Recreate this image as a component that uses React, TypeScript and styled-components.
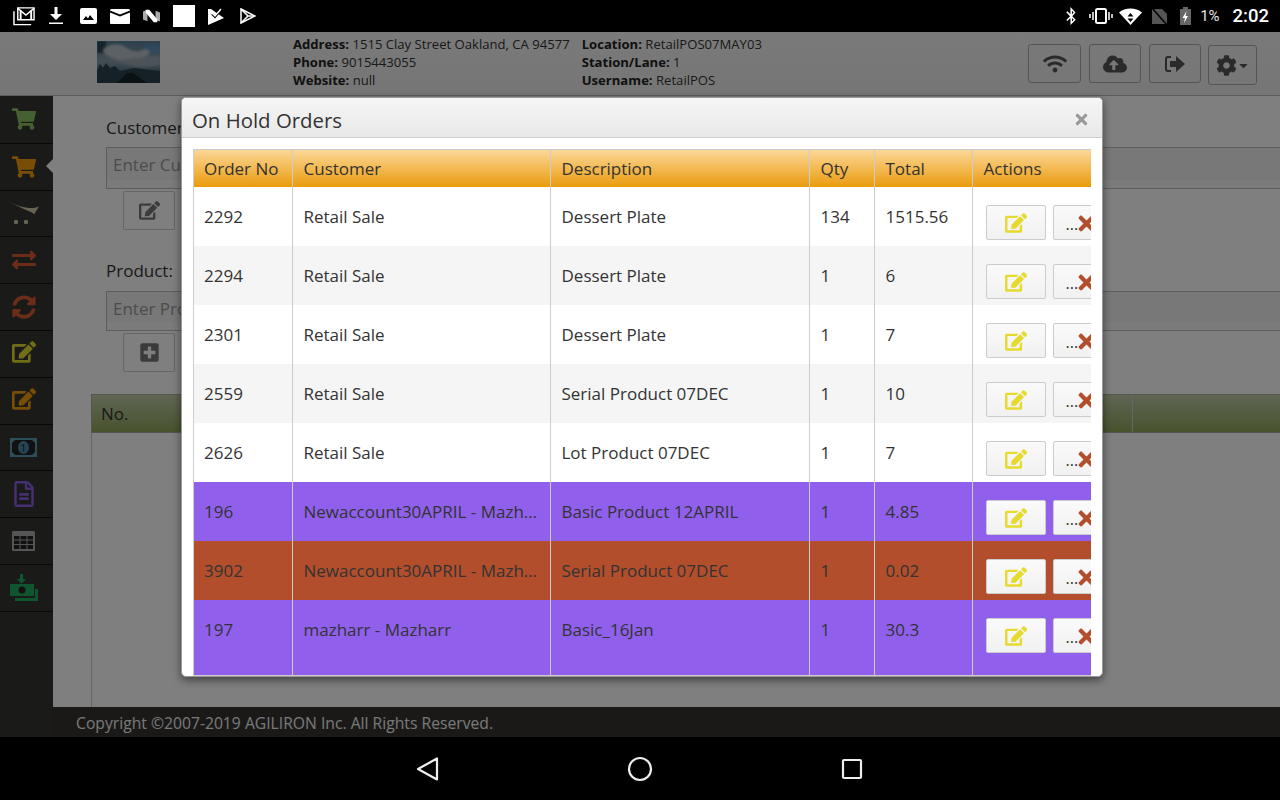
import React from 'react'
import styled, { createGlobalStyle } from 'styled-components'
import {
  FaShoppingCart, FaExchangeAlt, FaSyncAlt, FaEdit, FaRegFileAlt,
  FaWifi, FaCloudUploadAlt, FaCog, FaCaretDown, FaTimes, FaPlusSquare, FaBluetoothB,
} from 'react-icons/fa'

const GlobalStyle = createGlobalStyle`
  html, body { margin: 0; padding: 0; background: #000; }
  body { font-family: "Open Sans", "Liberation Sans", sans-serif; color: #333; }
  * { box-sizing: border-box; }
`

const Page = styled.div`
  width: 1280px;
  height: 800px;
  display: flex;
  flex-direction: column;
  overflow: hidden;
`

const StatusBar = styled.div`
  height: 32px;
  background: #000;
  display: flex;
  align-items: center;
  justify-content: space-between;
  padding: 0 11px 0 13px;
  color: #fff;
`

const StatusGroup = styled.div`
  display: flex;
  align-items: center;
  gap: ${p => p.$gap}px;
`

const BatteryText = styled.span`
  font-family: Roboto, sans-serif;
  font-size: 15px;
  color: #e4e4e4;
`

const Clock = styled.span`
  font-family: Roboto, sans-serif;
  font-size: 18.5px;
  font-weight: 500;
  margin-left: 4px;
`

const WhiteSquare = styled.div`
  width: 22px;
  height: 22px;
  background: #fff;
`

const Screen = styled.div`
  flex: 1;
  position: relative;
  display: flex;
  flex-direction: column;
  min-height: 0;
`

const Header = styled.header`
  height: 64px;
  background: linear-gradient(#f4f4f4, #ececec);
  border-bottom: 1px solid #bbb;
  display: flex;
  align-items: flex-start;
  padding: 0 23px 0 97px;
`

const Logo = styled.svg`
  width: 63px;
  height: 42px;
  margin-top: 9px;
  margin-right: 133px;
  flex: none;
`

const InfoColumn = styled.div`
  font-size: 13.1px;
  line-height: 18px;
  padding-top: 3px;
  margin-right: ${p => p.$right}px;
  white-space: nowrap;
  color: #333;

  b { font-weight: 700; color: #222; }
`

const HeaderButtons = styled.div`
  margin-left: auto;
  display: flex;
  gap: 8px;
  padding-top: 12px;
`

const HeaderButton = styled.div`
  width: ${p => p.$w}px;
  height: ${p => p.$h || 39}px;
  margin-top: ${p => p.$top || 0}px;
  margin-left: ${p => p.$left || 0}px;
  border: 1px solid #aaa;
  border-radius: 3px;
  display: flex;
  align-items: center;
  justify-content: center;
  color: #555;
  font-size: 24px;
`

const Body = styled.div`
  flex: 1;
  display: flex;
  min-height: 0;
`

const Sidebar = styled.nav`
  width: 53px;
  background: #353432;
  flex: none;
  padding-top: 1px;
`

const SideItem = styled.div`
  height: 46.8px;
  border-bottom: 1px solid #111;
  display: flex;
  align-items: center;
  justify-content: center;
  position: relative;
  padding-right: 6px;
  padding-bottom: ${p => p.$lift || 0}px;
  font-size: 24px;
  color: ${p => p.$color};
`

const ActiveArrow = styled.span`
  position: absolute;
  right: 0;
  top: 15px;
  border: 7px solid transparent;
  border-left: 0;
  border-right-color: #fff;
`

const Main = styled.div`
  flex: 1;
  display: flex;
  flex-direction: column;
  min-width: 0;
`

const Content = styled.div`
  flex: 1;
  background: #fff;
  padding: 21px 0 0 38px;
  overflow: hidden;
`

const Form = styled.div`
  padding-left: 15px;
`

const FieldLabel = styled.div`
  font-size: 17px;
  line-height: 22px;
  margin-bottom: ${p => p.$gap}px;
`

const Input = styled.div`
  height: ${p => p.$h}px;
  border: 1px solid #bbb;
  border-right: 0;
  background: linear-gradient(#f0f0f0 80%, #f6f6f6 80%);
  padding-left: 6px;
  font-size: 17px;
  line-height: 34px;
  color: #999;
`

const SmallButton = styled.div`
  width: 52px;
  height: 39px;
  margin: 2px 0 30px 17px;
  border: 1px solid #ccc;
  border-radius: 2px;
  display: flex;
  align-items: center;
  justify-content: center;
  color: #777;
  font-size: 21px;
`

const GridHead = styled.div`
  height: 39px;
  margin-top: -8px;
  background: linear-gradient(#c0cca8, #90a65a);
  border: 1px solid #aaa;
  border-right: 0;
  display: flex;
  align-items: center;
  padding-left: 9px;
  font-size: 17px;
`

const GridEnd = styled.div`
  width: 148px;
  align-self: stretch;
  margin-left: auto;
  border-left: 1px solid #ccc;
`

const GridBody = styled.div`
  height: 275px;
  border-left: 1px solid #ccc;
`

const Footer = styled.footer`
  height: 30px;
  background: #343331;
  color: #f0f0f0;
  font-size: 15.7px;
  line-height: 32px;
  padding-left: 23px;
`

const Backdrop = styled.div`
  position: absolute;
  inset: 0;
  background: rgba(0, 0, 0, 0.5);
`

const Modal = styled.div`
  position: absolute;
  top: 65px;
  left: 181px;
  width: 922px;
  height: 580px;
  background: #fff;
  border: 1px solid #999;
  border-radius: 5px;
  box-shadow: 0 3px 9px rgba(0, 0, 0, 0.5);
  overflow: hidden;
`

const ModalHeader = styled.div`
  height: 40px;
  background: linear-gradient(#f6f6f6, #e8e8e8);
  border-bottom: 1px solid #ccc;
  display: flex;
  align-items: center;
  justify-content: space-between;
  padding: 4px 12px 0 10px;
`

const ModalTitle = styled.div`
  font-size: 20.4px;
  color: #333;
`

const Close = styled.span`
  color: #999;
  font-size: 17px;
  display: flex;
`

const TableClip = styled.div`
  margin: 11px 0 0 11px;
  width: 898px;
  height: 527px;
  overflow: hidden;
  border-top: 1px solid #ccc;
  border-left: 1px solid #ccc;
  border-bottom: 1px solid #ccc;
`

const Table = styled.table`
  table-layout: fixed;
  width: 898px;
  border-collapse: collapse;
  font-size: 17px;
`

const Th = styled.th`
  height: 37px;
  padding: 0 10px;
  text-align: left;
  font-weight: 400;
  color: #333;
  background: linear-gradient(#fbd797, #ea9b0d);
  border-right: 1px solid #ccc;

  &:not(:first-child) { padding-left: 11px; }
  &:last-child { border-right: 0; }
`

const Row = styled.tr`
  background: ${p => p.$bg};
`

const Td = styled.td`
  height: ${p => (p.$tall ? 75 : 59)}px;
  padding: 19px 10px 0;
  vertical-align: top;
  line-height: 22px;
  white-space: nowrap;
  overflow: hidden;
  text-overflow: ellipsis;
  border-right: 1px solid #ccc;
  color: #333;

  &:not(:first-child) { padding-left: 11px; }
  &:last-child { border-right: 0; }
`

const ActionCell = styled.td`
  height: ${p => (p.$tall ? 75 : 59)}px;
  padding: 18px 0 0 13px;
  vertical-align: top;
  overflow: hidden;
`

const Actions = styled.div`
  display: flex;
  gap: 7px;
  width: 200px;
`

const ActionButton = styled.div`
  width: 60px;
  height: 35px;
  flex: none;
  position: relative;
  background: linear-gradient(#fafafa, #f1f1f1);
  border: 1px solid #ccc;
  border-radius: 2px;
  display: flex;
  align-items: center;
  justify-content: center;
  color: #e6da2e;
  font-size: 22px;
`

const Dots = styled.span`
  position: absolute;
  left: 12px;
  top: 7px;
  font-size: 16px;
  color: #333;
`

const RedX = styled.span`
  position: absolute;
  left: 21px;
  top: 6px;
  color: #b24e2b;
  font-size: 23px;
  display: flex;
`

const NavBar = styled.div`
  height: 63px;
  background: #000;
  display: flex;
  align-items: center;
  justify-content: center;
  gap: 187px;
`

const Bill = () => (
  <svg width="27" height="19" viewBox="0 0 27 19">
    <rect width="27" height="19" fill="#5a9bb5" />
    <path d="M5 2h17l3 3v9l-3 3H5l-3-3V5z" fill="#222" />
    <ellipse cx="13.500" cy="9.500" rx="5.500" ry="6.500" fill="#4a88a8" />
    <text x="13.500" y="14" textAnchor="middle" fontSize="11" fontFamily="Open Sans" fill="#222">1</text>
  </svg>
)

const CashDrop = () => (
  <svg width="28" height="27" viewBox="0 0 28 27">
    <path d="M10 0h3v5h3l-4.500 4.500L7 5h3z" fill="#1faa5f" />
    <rect y="10" width="24" height="12" fill="#1faa5f" />
    <circle cx="12" cy="16" r="3.500" fill="#222" />
    <path d="M25 15h3v12H5v-3h20z" fill="#1faa5f" />
  </svg>
)

const CartSwoosh = () => (
  <svg width="32" height="26" viewBox="0 0 32 26" fill="#cfc8a4">
    <path d="M0 1C8 6 18 8.500 26 8L31 6.500L26 14.500C25 11.500 12 8.500 0 1z" />
    <circle cx="8" cy="22" r="2.200" />
    <circle cx="18" cy="22" r="2.200" />
  </svg>
)

const GridIcon = () => (
  <svg width="23" height="20" viewBox="0 0 23 20">
    <rect width="23" height="20" rx="1.500" fill="#aaa" />
    <path d="M2 5h5.500v3.500H2zM8.500 5h6v3.500h-6zM15.500 5H21v3.500h-5.500zM2 9.500h5.500V13H2zM8.500 9.500h6V13h-6zM15.500 9.500H21V13h-5.500zM2 14h5.500v4H2zM8.500 14h6v4h-6zM15.500 14H21v4h-5.500z" fill="#222" />
  </svg>
)

const LogoutIcon = () => (
  <svg width="20" height="18" viewBox="0 0 20 18" fill="#555">
    <path d="M6 2H3a2 2 0 0 0-2 2v10a2 2 0 0 0 2 2h3" fill="none" stroke="#555" strokeWidth="2" />
    <path d="M5 6h6V1l9 8-9 8v-5H5z" />
  </svg>
)

const GmailIcon = () => (
  <svg width="22" height="20" viewBox="0 0 23 20" fill="none" stroke="#fff" strokeWidth="1.500">
    <path d="M1 5v14h18" />
    <path d="M5 1.500h17V14H5z" fill="#000" />
    <path d="M5 2l8.500 7L22 2" />
    <path d="M8 4v10M19 4v10" strokeWidth="2" />
  </svg>
)

const DownloadIcon = () => (
  <svg width="19" height="18" viewBox="0 0 19 18" fill="#fff">
    <path d="M6.500 0h3v7H14l-6 6-6-6h4.500zM1 15.500h14V17H1z" />
  </svg>
)

const PhotoIcon = () => (
  <svg width="17" height="16" viewBox="0 0 17 16">
    <rect width="17" height="16" rx="2" fill="#fff" />
    <path d="M3 12l3-4 2 2.500L10 7l4 5z" fill="#000" />
  </svg>
)

const MailIcon = () => (
  <svg width="20" height="15" viewBox="0 0 20 15" fill="#fff">
    <path d="M0 1.500A1.500 1.500 0 0 1 1.500 0h17A1.500 1.500 0 0 1 20 1.500L10 5.500 0 1.500z" />
    <path d="M0 3.500l10 4 10-4V14a1 1 0 0 1-1 1H1a1 1 0 0 1-1-1z" />
  </svg>
)

const NewsIcon = () => (
  <svg width="17" height="16" viewBox="0 0 19 16">
    <path d="M0 3l5-2v13l-5-2z" fill="#aaa" />
    <path d="M14 2l5 2v10l-5-1z" fill="#aaa" />
    <path d="M3 1h4l9 11v3h-4L3 4z" fill="#fff" />
  </svg>
)

const CheckFlag = () => (
  <svg width="19" height="17" viewBox="0 0 19 17">
    <path d="M0 1l3 0 5 3.500L16 10 0 17z" fill="#fff" />
    <path d="M4 6l3 3 6-7" fill="none" stroke="#000" strokeWidth="2" />
    <path d="M4 5l3 3 6-7" fill="none" stroke="#fff" strokeWidth="1.500" />
  </svg>
)

const PlayIcon = () => (
  <svg width="16" height="16" viewBox="0 0 16 16" fill="none" stroke="#fff" strokeWidth="1.500">
    <path d="M1 1l14 7-14 7z" />
    <path d="M1 1l7 7-7 7M8 8h7" />
  </svg>
)

const VibrateIcon = () => (
  <svg width="21" height="16" viewBox="0 0 21 16" overflow="visible" fill="none" stroke="#fff">
    <rect x="7" y="1" width="10" height="14" rx="1.500" strokeWidth="2" />
    <path d="M4 4v8M1 6v4M20 4v8M23 6v4" strokeWidth="1.500" />
  </svg>
)

const WifiData = () => (
  <svg width="23" height="17" viewBox="0 0 23 17">
    <path d="M0 4.500C6-1 17-1 23 4.500L11.500 17z" fill="#fff" />
    <path d="M11.500 5l3 3.500h-6zM11.500 14l-3-3.500h6z" fill="#000" />
  </svg>
)

const NoSim = () => (
  <svg width="20" height="17" viewBox="0 0 20 17">
    <path d="M1 1h10l5 5v10H1z" fill="#555" />
    <path d="M1 0l15 17" stroke="#000" strokeWidth="1.500" />
  </svg>
)

const BatteryIcon = () => (
  <svg width="11" height="18" viewBox="0 0 11 18">
    <rect y="2" width="11" height="16" fill="#666" />
    <rect x="3" width="5" height="2" fill="#666" />
    <path d="M6.500 4L2.500 11h2.500l-1 5 4-7H5.500z" fill="#fff" />
  </svg>
)

const orders = [
  { no: '2292', customer: 'Retail Sale', description: 'Dessert Plate', qty: '134', total: '1515.56', bg: '#fff' },
  { no: '2294', customer: 'Retail Sale', description: 'Dessert Plate', qty: '1', total: '6', bg: '#f5f5f5' },
  { no: '2301', customer: 'Retail Sale', description: 'Dessert Plate', qty: '1', total: '7', bg: '#fff' },
  { no: '2559', customer: 'Retail Sale', description: 'Serial Product 07DEC', qty: '1', total: '10', bg: '#f5f5f5' },
  { no: '2626', customer: 'Retail Sale', description: 'Lot Product 07DEC', qty: '1', total: '7', bg: '#fff' },
  { no: '196', customer: 'Newaccount30APRIL - Mazharr', description: 'Basic Product 12APRIL', qty: '1', total: '4.85', bg: '#9060ec' },
  { no: '3902', customer: 'Newaccount30APRIL - Mazharr', description: 'Serial Product 07DEC', qty: '1', total: '0.02', bg: '#b24e2b' },
  { no: '197', customer: 'mazharr - Mazharr', description: 'Basic_16Jan', qty: '1', total: '30.3', bg: '#9060ec', tall: true },
]

const sideItems = [
  { icon: <FaShoppingCart />, color: '#8fc163', lift: 1 },
  { icon: <FaShoppingCart />, color: '#f09d0c' , active: true },
  { icon: <CartSwoosh /> },
  { icon: <FaExchangeAlt />, color: '#d65a33' },
  { icon: <FaSyncAlt />, color: '#d65a33' },
  { icon: <FaEdit />, color: '#e0dc2e', lift: 3 },
  { icon: <FaEdit />, color: '#f09d0c', lift: 3 },
  { icon: <Bill /> },
  { icon: <FaRegFileAlt size={26} />, color: '#8a5fe0' },
  { icon: <GridIcon /> },
  { icon: <CashDrop /> },
]

const App = () => (
  <Page>
    <GlobalStyle />
    <StatusBar>
      <StatusGroup $gap={13}>
        <GmailIcon />
        <DownloadIcon />
        <PhotoIcon />
        <MailIcon />
        <NewsIcon />
        <WhiteSquare />
        <CheckFlag />
        <PlayIcon />
      </StatusGroup>
      <StatusGroup $gap={9}>
        <FaBluetoothB size={18} />
        <VibrateIcon />
        <WifiData />
        <NoSim />
        <BatteryIcon />
        <BatteryText>1%</BatteryText>
        <Clock>2:02</Clock>
      </StatusGroup>
    </StatusBar>

    <Screen>
      <Header>
        <Logo viewBox="0 0 63 42">
          <defs>
            <linearGradient id="sky" x1="0" y1="0" x2="0" y2="1">
              <stop offset="0" stopColor="#5a8098" />
              <stop offset="0.5" stopColor="#8a9caa" />
              <stop offset="0.68" stopColor="#5f7a88" />
              <stop offset="1" stopColor="#1c2e36" />
            </linearGradient>
            <filter id="soft">
              <feGaussianBlur stdDeviation="1.200" />
            </filter>
          </defs>
          <rect width="63" height="42" fill="url(#sky)" />
          <g filter="url(#soft)">
            <path d="M0 0h9v12H0z" fill="#2c4a5c" />
            <path d="M6 9c6-6 16-7 22-3s12 6 18 3 8 1 6 4-14 8-24 7S8 16 6 9z" fill="#b8c2ca" />
            <path d="M20 20c8-3 18-2 28-4s14-1 15 1v7c-14 3-30 2-43-4z" fill="#9aa8b2" />
            <path d="M47 5l10-2 6 3v6c-6 1-12-1-16-7z" fill="#5b93bd" />
          </g>
          <path d="M0 29l3-6 3 4 3-5 4 5 5-2 5 5 14-3 26 3v12H0z" fill="#2a434e" />
          <path d="M20 42l10-10h6l14 10z" fill="#16242a" />
        </Logo>
        <InfoColumn $right={12}>
          <div><b>Address:</b> 1515 Clay Street Oakland, CA 94577</div>
          <div><b>Phone:</b> 9015443055</div>
          <div><b>Website:</b> null</div>
        </InfoColumn>
        <InfoColumn>
          <div><b>Location:</b> RetailPOS07MAY03</div>
          <div><b>Station/Lane:</b> 1</div>
          <div><b>Username:</b> RetailPOS</div>
        </InfoColumn>
        <HeaderButtons>
          <HeaderButton $w={53}><FaWifi /></HeaderButton>
          <HeaderButton $w={52}><FaCloudUploadAlt /></HeaderButton>
          <HeaderButton $w={52}><LogoutIcon /></HeaderButton>
          <HeaderButton $w={49} $h={40} $top={1} $left={-1}><FaCog size={21} /><FaCaretDown size={13} /></HeaderButton>
        </HeaderButtons>
      </Header>

      <Body>
        <Sidebar>
          {sideItems.map((item, i) => (
            <SideItem key={i} $color={item.color} $lift={item.lift}>
              {item.icon}
              {item.active && <ActiveArrow />}
            </SideItem>
          ))}
        </Sidebar>
        <Main>
          <Content>
            <Form>
              <FieldLabel $gap={8}>Customer:</FieldLabel>
              <Input $h={42}>Enter Customer</Input>
              <SmallButton><FaEdit /></SmallButton>
              <FieldLabel $gap={9}>Product:</FieldLabel>
              <Input $h={40}>Enter Product</Input>
              <SmallButton><FaPlusSquare /></SmallButton>
            </Form>
            <GridHead>
              No.
              <GridEnd />
            </GridHead>
            <GridBody />
          </Content>
          <Footer>Copyright ©2007-2019 AGILIRON Inc. All Rights Reserved.</Footer>
        </Main>
      </Body>

      <Backdrop />
      <Modal>
        <ModalHeader>
          <ModalTitle>On Hold Orders</ModalTitle>
          <Close><FaTimes /></Close>
        </ModalHeader>
        <TableClip>
          <Table>
            <colgroup>
              <col width="98" />
              <col width="258" />
              <col width="259" />
              <col width="65" />
              <col width="98" />
              <col width="120" />
            </colgroup>
            <thead>
              <tr>
                <Th>Order No</Th>
                <Th>Customer</Th>
                <Th>Description</Th>
                <Th>Qty</Th>
                <Th>Total</Th>
                <Th>Actions</Th>
              </tr>
            </thead>
            <tbody>
              {orders.map(order => (
                <Row key={order.no} $bg={order.bg}>
                  <Td $tall={order.tall}>{order.no}</Td>
                  <Td $tall={order.tall}>{order.customer}</Td>
                  <Td $tall={order.tall}>{order.description}</Td>
                  <Td $tall={order.tall}>{order.qty}</Td>
                  <Td $tall={order.tall}>{order.total}</Td>
                  <ActionCell $tall={order.tall}>
                    <Actions>
                      <ActionButton><FaEdit /></ActionButton>
                      <ActionButton>
                        <Dots>...</Dots>
                        <RedX><FaTimes /></RedX>
                      </ActionButton>
                    </Actions>
                  </ActionCell>
                </Row>
              ))}
            </tbody>
          </Table>
        </TableClip>
      </Modal>
    </Screen>

    <NavBar>
      <svg width="24" height="26" viewBox="0 0 24 26" fill="none" stroke="#eee" strokeWidth="2.200" strokeLinejoin="round">
        <path d="M21 2.500v21L2 13z" />
      </svg>
      <svg width="26" height="26" viewBox="0 0 26 26" fill="none" stroke="#eee" strokeWidth="2.200">
        <circle cx="13" cy="13" r="11" />
      </svg>
      <svg width="24" height="24" viewBox="0 0 24 24" fill="none" stroke="#eee" strokeWidth="2.200">
        <rect x="3" y="3" width="18" height="18" rx="1" />
      </svg>
    </NavBar>
  </Page>
)

export default App
